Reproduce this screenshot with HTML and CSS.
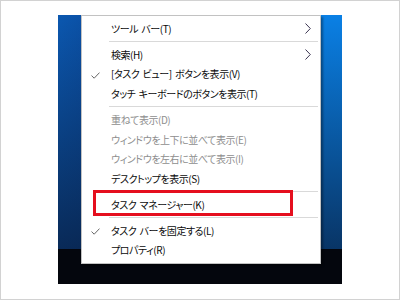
FILE: index.html
```html
<!DOCTYPE html>
<html lang="ja">
<head>
<meta charset="utf-8">
<title>タスクバー メニュー</title>
<link rel="stylesheet" href="styles.css">
</head>
<body>
<div class="frame">
  <div class="desktop">
    <div class="menu">
      <div class="item"><span class="label">ツール バー(T)</span><svg class="arrow" width="6" height="11" viewBox="0 0 6 11"><path d="M0.5 0.5 L5.3 5.5 L0.5 10.5" fill="none" stroke="#3a3450" stroke-width="1"/></svg></div>
      <div class="sep"></div>
      <div class="item"><span class="label">検索(H)</span><svg class="arrow" width="6" height="11" viewBox="0 0 6 11"><path d="M0.5 0.5 L5.3 5.5 L0.5 10.5" fill="none" stroke="#3a3450" stroke-width="1"/></svg></div>
      <div class="item"><svg class="check" width="9" height="7" viewBox="0 0 9 7"><path d="M0.5 3.6 L3.2 6.2 L8.5 0.6" fill="none" stroke="#666" stroke-width="1"/></svg><span class="label">[タスク ビュー] ボタンを表示(V)</span></div>
      <div class="item"><span class="label">タッチ キーボードのボタンを表示(T)</span></div>
      <div class="sep"></div>
      <div class="item off"><span class="label">重ねて表示(D)</span></div>
      <div class="item off"><span class="label">ウィンドウを上下に並べて表示(E)</span></div>
      <div class="item off"><span class="label">ウィンドウを左右に並べて表示(I)</span></div>
      <div class="item"><span class="label">デスクトップを表示(S)</span></div>
      <div class="sep"></div>
      <div class="item hl"><span class="label">タスク マネージャー(K)</span></div>
      <div class="sep"></div>
      <div class="item"><svg class="check" width="9" height="7" viewBox="0 0 9 7"><path d="M0.5 3.6 L3.2 6.2 L8.5 0.6" fill="none" stroke="#666" stroke-width="1"/></svg><span class="label">タスク バーを固定する(L)</span></div>
      <div class="item"><span class="label">プロパティ(R)</span></div>
    </div>
  </div>
</div>
</body>
</html>
```
FILE: styles.css
```css
html, body {
  margin: 0;
  padding: 0;
  background: #fff;
}

.frame {
  width: 400px;
  height: 300px;
  box-sizing: border-box;
  border: 1px solid #d2d2d2;
  padding: 14px 0 0 57px;
  background: #fff;
}

.desktop {
  width: 284px;
  height: 269px;
  box-sizing: border-box;
  padding-left: 23px;
  display: flex;
  align-items: flex-start;
  background:
    linear-gradient(to bottom, rgba(0,0,0,0) 234px, #04060d 234px),
    linear-gradient(to bottom, rgba(8,25,55,0) 0, rgba(8,25,55,0.73) 234px),
    linear-gradient(to right, #0b58b0 0, #0b52a8 22px, #0a6fcf 120px, #0a80e5 264px, #0a80e5 100%);
}

.menu {
  width: 240px;
  box-sizing: border-box;
  background: #fff;
  border: 1px solid #c2c2c2;
  padding: 3px 0 3px 0;
  box-shadow: 2px 2px 2px rgba(0,0,0,0.35);
  font-family: "Noto Sans CJK JP", "Noto Sans", sans-serif;
  font-size: 10px;
  letter-spacing: -0.45px;
  word-spacing: 1.5px;
  font-feature-settings: "palt";
  color: #0a0a0a;
}

.item {
  position: relative;
  height: 19.6px;
  display: flex;
  align-items: center;
  padding-left: 29px;
  padding-right: 9px;
  white-space: pre;
}

.item.off {
  color: #8e8e8e;
}

.label {
  line-height: 1;
}

.arrow {
  margin-left: auto;
  display: block;
}

.check {
  position: absolute;
  left: 9px;
  top: 7px;
}

.sep {
  height: 1px;
  margin: 2.7px 2px 2.7px 27px;
  background: #d9d9d9;
}

.item.hl::after {
  content: "";
  position: absolute;
  left: 11px;
  top: -5px;
  width: 200px;
  height: 26px;
  box-sizing: border-box;
  border: 3px solid #e50f1e;
}
```
